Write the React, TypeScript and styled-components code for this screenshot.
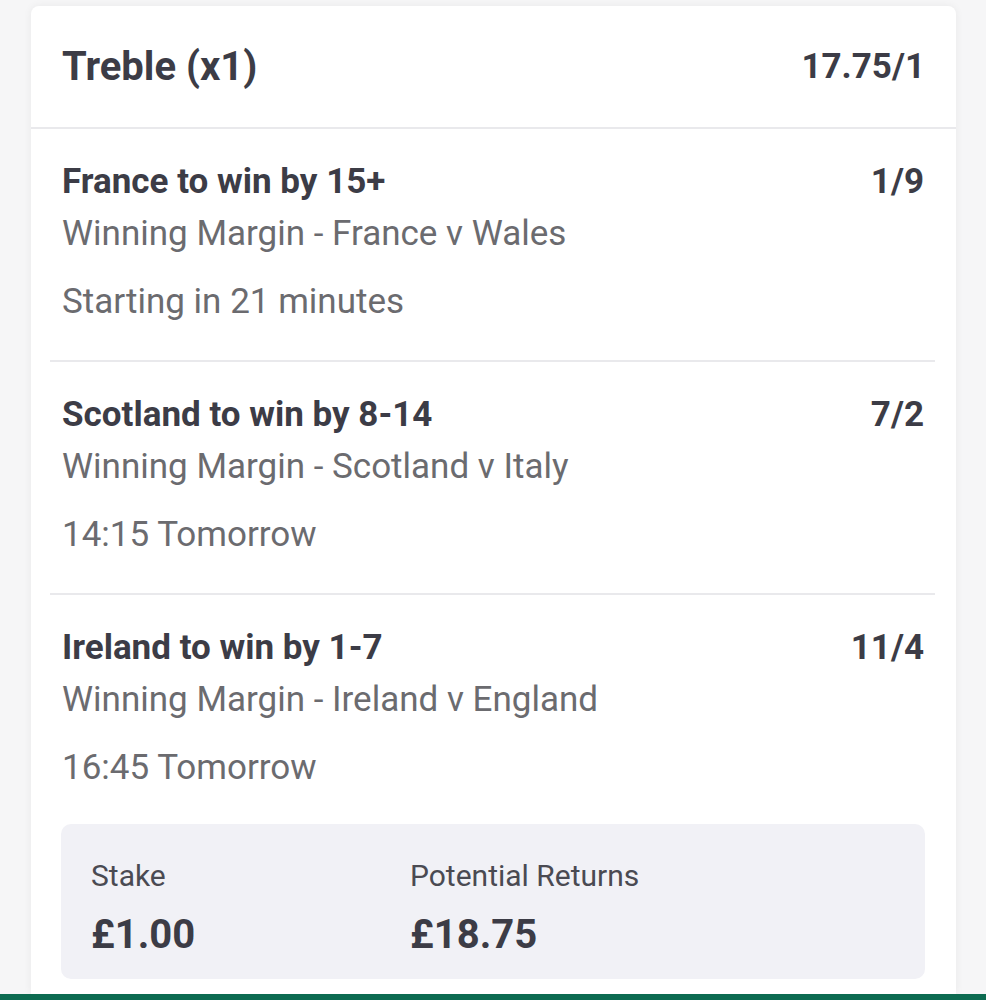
import React from "react";
import styled, { createGlobalStyle } from "styled-components";

const Global = createGlobalStyle`
  html, body { margin: 0; padding: 0; }
  body {
    background: #f6f6f7;
    font-family: Roboto, "Noto Sans", sans-serif;
    -webkit-font-smoothing: antialiased;
  }
`;

const Page = styled.div`
  height: 1000px;
  display: flex;
  flex-direction: column;
  overflow: hidden;
`;

const Card = styled.div`
  margin: 6px 30px 0 31px;
  padding-bottom: 15px;
  background: #ffffff;
  border-radius: 8px 8px 0 0;
  box-shadow: 0 0 8px rgba(0, 0, 0, 0.06);
  display: flex;
  flex-direction: column;
`;

const Header = styled.div`
  height: 121px;
  display: flex;
  align-items: center;
  justify-content: space-between;
  padding: 0 31px 0 31px;
  border-bottom: 2px solid #e9e9ec;
  color: #3c3c46;
  font-weight: 700;
`;

const HeaderTitle = styled.span`
  font-size: 40px;
  line-height: 47px;
`;

const HeaderOdds = styled.span`
  font-size: 35px;
  line-height: 47px;
`;

const Legs = styled.div`
  padding: 0 21px 0 19px;
  display: flex;
  flex-direction: column;
`;

const Leg = styled.div<{ $last?: boolean }>`
  padding: 32px 11px ${(p) => (p.$last ? "36px" : "38px")} 12px;
  border-bottom: ${(p) => (p.$last ? "none" : "2px solid #e9e9ec")};
  display: flex;
  flex-direction: column;
`;

const LegTop = styled.div`
  display: flex;
  justify-content: space-between;
  align-items: baseline;
  font-weight: 700;
  font-size: 35px;
  line-height: 41px;
  color: #3c3c46;
`;

const Market = styled.div`
  font-size: 35px;
  line-height: 41px;
  color: #6b6b6f;
  margin-top: 11px;
`;

const Time = styled.div`
  font-size: 35px;
  line-height: 41px;
  color: #6b6b6f;
  margin-top: 27px;
`;

const StakeBox = styled.div`
  margin: 0 31px 0 30px;
  background: #f1f1f6;
  border-radius: 10px;
  padding: 34px 30px 21px;
  display: grid;
  grid-template-columns: 319px 1fr;
`;

const StakeCol = styled.div`
  display: flex;
  flex-direction: column;
`;

const StakeLabel = styled.div`
  font-size: 30px;
  line-height: 36px;
  color: #4a4a52;
`;

const StakeValue = styled.div`
  font-size: 40px;
  line-height: 47px;
  font-weight: 700;
  color: #3c3c46;
  margin-top: 17px;
`;

const GreenBar = styled.div`
  height: 7px;
  background: #0d6b51;
`;

const legs = [
  { sel: "France to win by 15+", odds: "1/9", market: "Winning Margin - France v Wales", time: "Starting in 21 minutes" },
  { sel: "Scotland to win by 8-14", odds: "7/2", market: "Winning Margin - Scotland v Italy", time: "14:15 Tomorrow" },
  { sel: "Ireland to win by 1-7", odds: "11/4", market: "Winning Margin - Ireland v England", time: "16:45 Tomorrow" },
];

export default function App() {
  return (
    <Page>
      <Global />
      <Card>
        <Header>
          <HeaderTitle>Treble (x1)</HeaderTitle>
          <HeaderOdds>17.75/1</HeaderOdds>
        </Header>
        <Legs>
          {legs.map((l, i) => (
            <Leg key={i} $last={i === legs.length - 1}>
              <LegTop>
                <span>{l.sel}</span>
                <span>{l.odds}</span>
              </LegTop>
              <Market>{l.market}</Market>
              <Time>{l.time}</Time>
            </Leg>
          ))}
        </Legs>
        <StakeBox>
          <StakeCol>
            <StakeLabel>Stake</StakeLabel>
            <StakeValue>£1.00</StakeValue>
          </StakeCol>
          <StakeCol>
            <StakeLabel>Potential Returns</StakeLabel>
            <StakeValue>£18.75</StakeValue>
          </StakeCol>
        </StakeBox>
      </Card>
      <GreenBar />
    </Page>
  );
}
